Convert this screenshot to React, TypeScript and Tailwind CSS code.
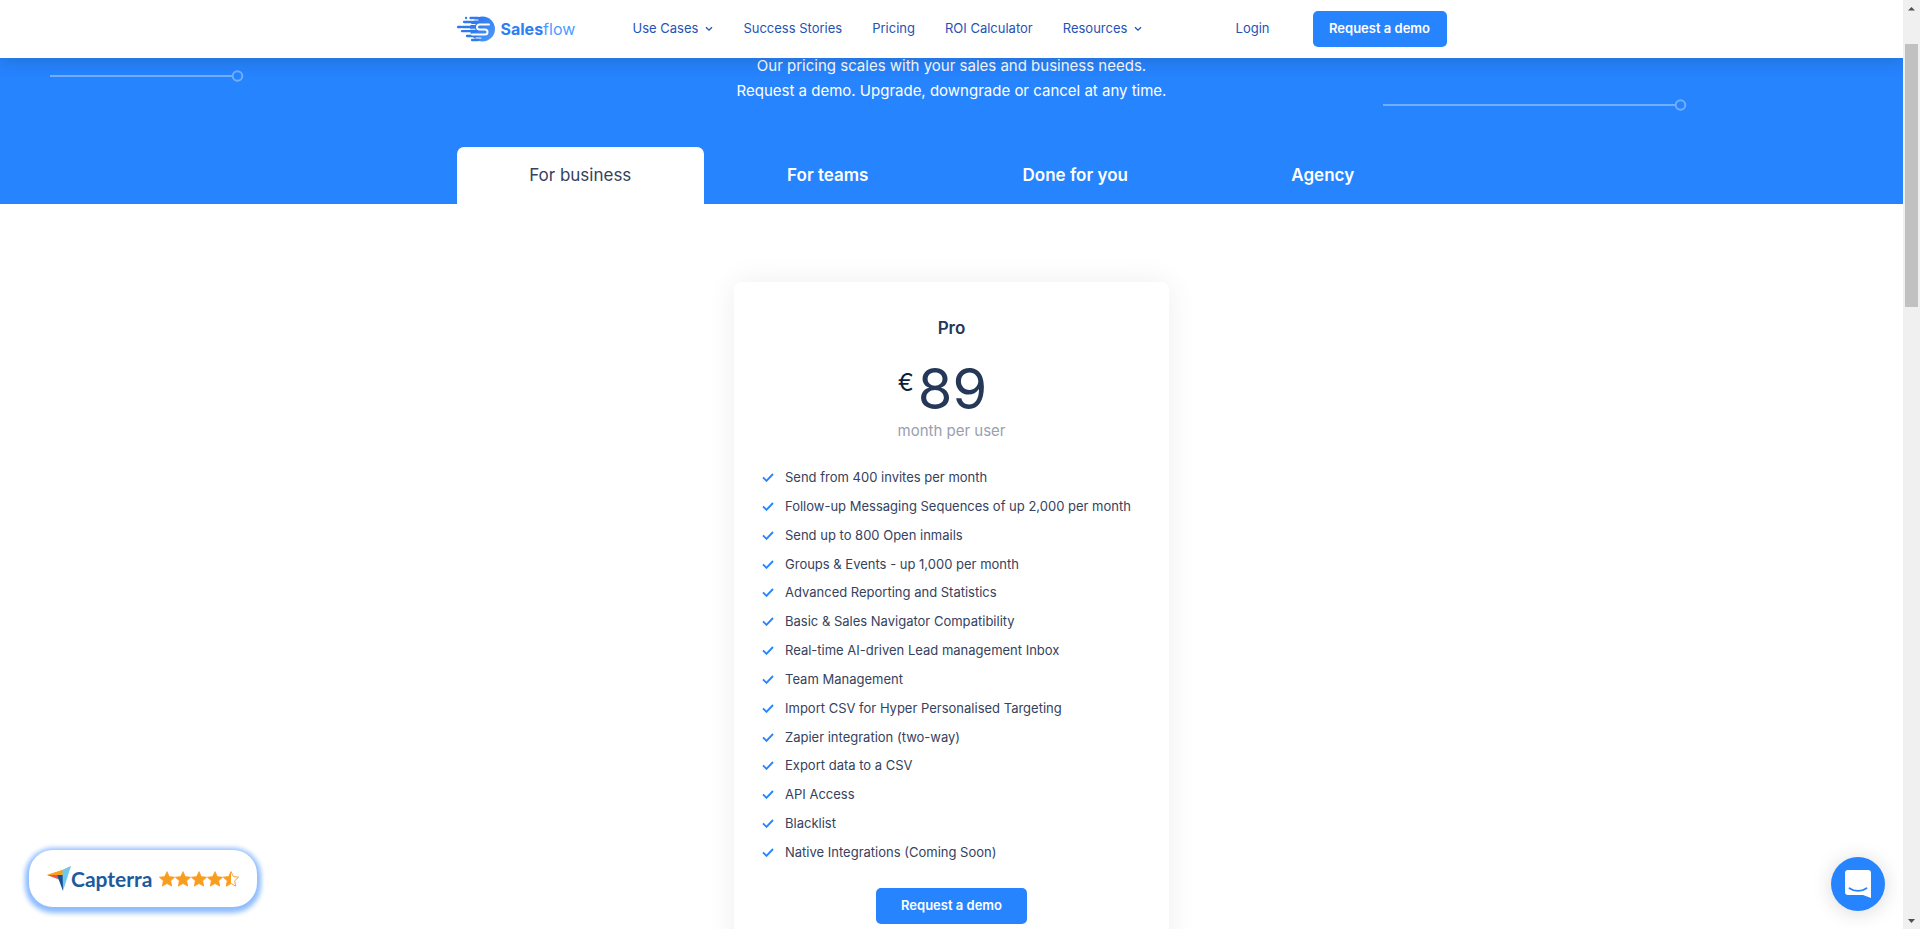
import { useState } from "react";

const features = [
  "Send from 400 invites per month",
  "Follow-up Messaging Sequences of up 2,000 per month",
  "Send up to 800 Open inmails",
  "Groups & Events - up 1,000 per month",
  "Advanced Reporting and Statistics",
  "Basic & Sales Navigator Compatibility",
  "Real-time AI-driven Lead management Inbox",
  "Team Management",
  "Import CSV for Hyper Personalised Targeting",
  "Zapier integration (two-way)",
  "Export data to a CSV",
  "API Access",
  "Blacklist",
  "Native Integrations (Coming Soon)",
];

const tabs = ["For business", "For teams", "Done for you", "Agency"];

function Logo() {
  return (
    <a href="#" className="flex w-[176px] items-center gap-[6px] text-[#2e7ff5]">
      <svg width="38" height="26" viewBox="0 0 38 26" aria-hidden="true">
        <defs>
          <linearGradient id="mark" x1="0" y1="0" x2="1" y2="1">
            <stop offset="0" stopColor="#2a70e6" />
            <stop offset="1" stopColor="#4c9bff" />
          </linearGradient>
        </defs>
        <circle cx="25.500" cy="13" r="12.500" fill="url(#mark)" />
        <g stroke="#2f7bee" strokeWidth="2.300" strokeLinecap="round">
          <path d="M13.500 2H21M9 2h.1M7 6h12M5.500 11H19M1 11h3M5 15.200h15M10 20h10M15 24h6" />
        </g>
        <g fill="none" stroke="#fff" strokeLinecap="round">
          <path d="M32 8.500H22.500a2.500 2.500 0 0 0 0 5H28a2.500 2.500 0 0 1 0 5H15" strokeWidth="2" />
          <path d="M15 4h6M12 8.500h6M13 13.200h5M19 22h5" strokeWidth="1.100" />
        </g>
      </svg>
      <span className="text-[16px] leading-5">
        <span className="font-bold">Sales</span>
        <span className="text-[#4c9bff]">flow</span>
      </span>
    </a>
  );
}

function Chevron() {
  return (
    <svg width="8" height="6" viewBox="0 0 8 6" fill="none" stroke="currentColor" strokeWidth="1.300" aria-hidden="true">
      <path d="M1 1.200 4 4.200 7 1.200" />
    </svg>
  );
}

function Capterra() {
  const star = "M7 .5l2 4.400 4.700.5-3.500 3.200 1 4.700L7 10.900l-4.200 2.400 1-4.700L.3 5.400 5 4.900z";
  return (
    <a
      href="#"
      className="absolute bottom-[22px] left-[29px] flex h-[57px] w-[228px] items-center rounded-[24px] bg-white pl-[18px] shadow-[0_2px_5px_4px_#8dbcff]"
    >
      <svg width="24" height="26" viewBox="0 0 24 26" aria-hidden="true">
        <path d="M0 9 15.500 4v5z" fill="#f9a11b" />
        <path d="M0 9h15.500L24 0 15.500 4z" fill="#f9a11b" />
        <path d="M0 9h10l2 4.500z" fill="#ec5547" />
        <path d="M10 9h6v16z" fill="#17529a" />
        <path d="M15.500 4 24 0 16 25z" fill="#6fc8ee" />
      </svg>
      <span className="w-[83px] font-[Lato,sans-serif] text-[21px] leading-6 font-bold text-[#1c5a9e]">Capterra</span>
      <span className="ml-[5px] flex" role="img" aria-label="4.5 stars">
        {[0, 1, 2, 3].map((i) => (
          <svg key={i} width="16" height="16" viewBox="0 0 14 14">
            <path d={star} fill="#f99d1f" stroke="#f99d1f" strokeWidth="0.600" strokeLinejoin="round" />
          </svg>
        ))}
        <svg width="16" height="16" viewBox="0 0 14 14">
          <path d={star} fill="none" stroke="#f99d1f" strokeWidth="0.800" strokeLinejoin="round" />
          <path d="M7 .5v10.400l-4.200 2.400 1-4.700L.3 5.400 5 4.900z" fill="#f99d1f" />
        </svg>
      </span>
    </a>
  );
}

function Scrollbar() {
  return (
    <div className="flex w-[17px] shrink-0 flex-col items-center bg-[#f0f0f0] pb-[6px]" aria-hidden="true">
      <svg width="17" height="17" viewBox="0 0 17 17" fill="#505050">
        <path d="M5 10.500h7L8.500 7z" />
      </svg>
      <div className="mt-[27px] h-[263px] w-[13px] bg-[#c1c1c1]" />
      <svg className="mt-auto" width="7" height="4" viewBox="0 0 7 4" fill="#505050">
        <path d="M0 0h7L3.500 4z" />
      </svg>
    </div>
  );
}

export default function App() {
  const [active, setActive] = useState(0);
  return (
    <div className="flex h-screen overflow-hidden bg-white font-[Inter,'Noto_Sans',sans-serif] text-[#35425e]">
      <div className="relative flex min-w-0 flex-1 flex-col overflow-hidden">
        <header className="z-10 flex h-[58px] shrink-0 justify-center bg-white shadow-[0_4px_16px_rgba(26,26,26,0.18)]">
          <div className="flex w-[990px] items-center text-[13px] text-[#1f52b5]">
            <Logo />
            <nav className="flex items-center gap-[30px]">
              <a href="#" className="flex items-center gap-[7px]">
                Use Cases <Chevron />
              </a>
              <a href="#">Success Stories</a>
              <a href="#">Pricing</a>
              <a href="#">ROI Calculator</a>
              <a href="#" className="flex items-center gap-[7px]">
                Resources <Chevron />
              </a>
            </nav>
            <a href="#" className="mr-[43px] ml-auto">Login</a>
            <button type="button" className="h-9 w-[134px] rounded-[5px] bg-[#2684ff] font-semibold text-white">
              Request a demo
            </button>
          </div>
        </header>

        <section className="relative flex h-[146px] shrink-0 flex-col items-center justify-between bg-[#2684ff] text-white">
          <svg className="absolute top-[12px] left-[50px] opacity-35" width="194" height="12" viewBox="0 0 194 12" fill="none" stroke="#fff" strokeWidth="2" aria-hidden="true">
            <path d="M0 6h182" />
            <circle cx="187.500" cy="6" r="4.800" />
          </svg>
          <svg className="absolute top-[41px] right-[216px] opacity-35" width="304" height="12" viewBox="0 0 304 12" fill="none" stroke="#fff" strokeWidth="2" aria-hidden="true">
            <path d="M0 6h292" />
            <circle cx="297.500" cy="6" r="4.800" />
          </svg>
          <p className="-mt-[5px] text-center text-[15px] leading-[25px]">
            Our pricing scales with your sales and business needs.
            <br />
            Request a demo. Upgrade, downgrade or cancel at any time.
          </p>
          <div role="tablist" className="grid w-[990px] grid-cols-4">
            {tabs.map((tab, i) => (
              <button
                key={tab}
                type="button"
                role="tab"
                aria-selected={i === active}
                onClick={() => setActive(i)}
                className={
                  i === active
                    ? "h-[57px] rounded-t-[7px] bg-white text-[17px] text-[#35425e]"
                    : "h-[57px] text-[17px] font-semibold text-white"
                }
              >
                {tab}
              </button>
            ))}
          </div>
        </section>

        <main className="flex justify-center pt-[78px]">
          <article className="flex w-[435px] shrink-0 flex-col items-center rounded-[7px] bg-white pt-[34px] pb-10 shadow-[0_0_30px_rgba(0,0,0,0.07)]">
            <h2 className="text-[17px] leading-6 font-semibold text-[#263858]">Pro</h2>
            <div className="mt-[18px] flex items-start gap-[4px] pr-[18px]">
              <span className="pt-[11px] text-[24px] leading-[28px] text-[#0b1f3f]">€</span>
              <span className="text-[56px] leading-[63px] text-[#263858]">89</span>
            </div>
            <p className="text-[15px] leading-[20px] text-[#98a0b0]">month per user</p>
            <ul className="mt-[26px] flex h-[395px] w-full flex-col justify-between pl-[28px]">
              {features.map((f) => (
                <li key={f} className="flex items-center gap-[11px] text-[13px] leading-5">
                  <svg width="12" height="10" viewBox="0 0 12 10" fill="none" stroke="#2684ff" strokeWidth="1.900" aria-hidden="true">
                    <path d="M1 5.300 4.500 8.800 11 2" />
                  </svg>
                  {f}
                </li>
              ))}
            </ul>
            <button type="button" className="mt-[26px] h-9 w-[151px] rounded-[5px] bg-[#2684ff] text-[13px] font-semibold text-white">
              Request a demo
            </button>
          </article>
        </main>

        <Capterra />
        <button
          type="button"
          aria-label="Open chat"
          className="absolute right-[18px] bottom-[18px] flex size-[54px] items-center justify-center rounded-full bg-[#2684ff] shadow-[0_2px_20px_rgba(0,0,0,0.15)]"
        >
          <svg width="26" height="28" viewBox="0 0 26 28" aria-hidden="true">
            <path d="M3 0h20a3 3 0 0 1 3 3v25l-8-3H3a3 3 0 0 1-3-3V3a3 3 0 0 1 3-3z" fill="#fff" />
            <path d="M4.500 18.200c5 3.600 12 3.600 17 0" fill="none" stroke="#2684ff" strokeWidth="1.800" strokeLinecap="round" />
          </svg>
        </button>
      </div>
      <Scrollbar />
    </div>
  );
}
